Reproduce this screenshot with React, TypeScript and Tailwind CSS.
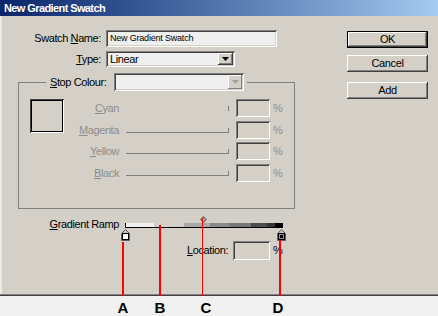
import React from "react";

const raised =
  "shadow-[inset_-1px_-1px_0_#404040,inset_1px_1px_0_#ffffff,inset_-2px_-2px_0_#808080]";
const sunken =
  "shadow-[inset_1px_1px_0_#808080,inset_-1px_-1px_0_#ffffff,inset_2px_2px_0_#404040,inset_-2px_-2px_0_#d4d0c8]";

function DownArrow({ color }: { color: string }) {
  return (
    <svg width="7" height="4" viewBox="0 0 7 4">
      <polygon points="0,0 7,0 3.5,4" fill={color} />
    </svg>
  );
}

function ColourRow({
  label,
  full,
  mt,
}: {
  label: React.ReactNode;
  full: boolean;
  mt: string;
}) {
  return (
    <div className={`flex h-[18px] items-start ${mt}`}>
      <span className="w-[55px] text-right leading-[18px] text-[#8d8d8d]">{label}</span>
      <div
        className={
          full
            ? "ml-[7px] mt-[7px] h-[5px] w-[103px] border-b border-r border-[#808080]"
            : "ml-[7px] mt-[7px] h-[5px] w-[103px] border-r border-[#808080]"
        }
      />
      <div className={`ml-[7px] h-[18px] w-[34px] bg-[#d4d0c8] ${sunken}`} />
      <span className="ml-[3px] leading-[18px] text-[#8d8d8d]">%</span>
    </div>
  );
}

export default function App() {
  return (
    <div className="relative h-[316px] w-[438px] overflow-hidden bg-[#f0f0f0] font-['Liberation_Sans',Arial,sans-serif] text-[11px] tracking-[-0.4px] text-black">
      <div className="flex h-[296px] flex-col bg-[#d4d0c8] shadow-[inset_0_-1px_0_#404040,inset_0_-2px_0_#808080,inset_2px_0_0_#eceae6]">
        {/* Title bar */}
        <div className="h-[16px] shrink-0 bg-linear-to-r from-[#0a246a] to-[#a6caf0] pl-[4px] text-[11px] font-bold leading-[16px] tracking-[-0.6px] text-white">
          New Gradient Swatch
        </div>

        <div className="flex flex-1">
          {/* Left column */}
          <div className="w-[347px] pt-[14px]">
            <div className="flex h-[17px] items-center">
              <span className="w-[101px] text-right">
                Swatch <u>N</u>ame:
              </span>
              <div
                className={`ml-[5px] flex h-[17px] w-[171px] items-center bg-[#efefef] pl-[4px] text-[9px] tracking-[-0.2px] ${sunken}`}
              >
                New Gradient Swatch
              </div>
            </div>

            <div className="mt-[4px] flex h-[16px] items-center">
              <span className="w-[101px] text-right">
                <u>T</u>ype:
              </span>
              <div
                className={`ml-[5px] flex h-[16px] w-[129px] items-center bg-[#efefef] p-[2px] ${sunken}`}
              >
                <span className="flex-1 pl-[2px] text-[11px]">Linear</span>
                <div
                  className={`flex h-full w-[15px] items-center justify-center bg-[#d4d0c8] ${raised}`}
                >
                  <DownArrow color="#000000" />
                </div>
              </div>
            </div>

            <fieldset className="ml-[18px] mt-[6px] h-[136px] w-[277px] border border-[#808080] p-0">
              <legend className="ml-[27px] pl-[4px] pr-[3px]">
                <div className="flex h-[18px] items-center">
                  <span className="w-[60px]">
                    <u>S</u>top Colour:
                  </span>
                  <div
                    className={`ml-[4px] flex h-[18px] w-[130px] bg-[#efefef] p-[2px] ${sunken}`}
                  >
                    <span className="flex-1" />
                    <div className="flex h-full w-[14px] items-center justify-center bg-[#d4d0c8] shadow-[inset_-1px_-1px_0_#808080,inset_1px_1px_0_#ffffff]">
                      <DownArrow color="#a0a0a0" />
                    </div>
                  </div>
                </div>
              </legend>

              <div className="flex pl-[11px] pt-[8px]">
                <div className="h-[34px] w-[34px] p-[1px] shadow-[inset_1px_1px_0_#404040,inset_-1px_-1px_0_#ffffff]">
                  <div className="h-full w-full border border-black" />
                </div>
                <div className="flex flex-col">
                  <ColourRow
                    label={
                      <>
                        <u>C</u>yan
                      </>
                    }
                    full={false}
                    mt="mt-0"
                  />
                  <ColourRow
                    label={
                      <>
                        <u>M</u>agenta
                      </>
                    }
                    full={true}
                    mt="mt-[4px]"
                  />
                  <ColourRow
                    label={
                      <>
                        <u>Y</u>ellow
                      </>
                    }
                    full={true}
                    mt="mt-[3px]"
                  />
                  <ColourRow
                    label={
                      <>
                        <u>B</u>lack
                      </>
                    }
                    full={true}
                    mt="mt-[4px]"
                  />
                </div>
              </div>
            </fieldset>

            {/* Gradient ramp */}
            <div className="mt-[14px] flex h-[5px] items-center">
              <span className="mb-[3px] w-[119px] text-right leading-[11px]">
                <u>G</u>radient Ramp
              </span>
              <div className="relative ml-[6px] flex h-[5px] w-[158px] border-b border-l border-black">
                <div className="h-full w-[28px] bg-[#f0f0f0]" />
                <div className="h-full w-[30px] bg-[#d4d0c8]" />
                <div className="h-full w-[26px] bg-[#a8a8a8]" />
                <div className="h-full w-[20px] bg-[#8a8a8a]" />
                <div className="h-full w-[21px] bg-[#767676]" />
                <div className="h-full w-[16px] bg-[#4e4e4e]" />
                <div className="h-full w-[8px] bg-[#343434]" />
                <div className="h-full w-[8px] bg-[#000000]" />

                <svg
                  className="absolute left-[74px] top-[-7px]"
                  width="7"
                  height="7"
                  viewBox="0 0 7 7"
                >
                  <polygon points="3.5,0 7,3.5 3.5,7 0,3.5" fill="#606060" />
                  <polygon points="3.5,1.5 5.5,3.5 3.5,5.5 1.5,3.5" fill="#b0b0b0" />
                </svg>
                <svg
                  className="absolute left-[-5px] top-[6px]"
                  width="9"
                  height="12"
                  viewBox="0 0 9 12"
                >
                  <polygon
                    points="4.5,0.5 8.5,4.5 8.5,11.5 0.5,11.5 0.5,4.5"
                    fill="#c0c0c0"
                    stroke="#606060"
                  />
                  <rect x="1.5" y="4.5" width="6" height="6" fill="#ffffff" stroke="#000000" />
                </svg>
                <svg
                  className="absolute left-[151px] top-[6px]"
                  width="9"
                  height="12"
                  viewBox="0 0 9 12"
                >
                  <polygon
                    points="4.5,0.5 8.5,4.5 8.5,11.5 0.5,11.5 0.5,4.5"
                    fill="#c0c0c0"
                    stroke="#606060"
                  />
                  <rect x="1.5" y="4.5" width="6" height="6" fill="#000000" stroke="#000000" />
                  <rect x="2.5" y="5.5" width="4" height="4" fill="#000000" stroke="#909090" />
                </svg>
              </div>
            </div>

            <div className="mt-[13px] flex h-[19px] items-center pl-[187px]">
              <span className="w-[42px]">
                <u>L</u>ocation:
              </span>
              <div className={`ml-[4px] h-[19px] w-[37px] bg-[#d4d0c8] ${sunken}`} />
              <span className="ml-[3px]">%</span>
            </div>
          </div>

          {/* Buttons */}
          <div className="flex flex-col pt-[15px]">
            <div className="h-[17px] w-[81px] border border-black">
              <div
                className={`flex h-full items-center justify-center bg-[#d4d0c8] ${raised}`}
              >
                OK
              </div>
            </div>
            <div
              className={`mt-[7px] flex h-[17px] w-[81px] items-center justify-center ${raised}`}
            >
              Cancel
            </div>
            <div
              className={`mt-[10px] flex h-[17px] w-[81px] items-center justify-center ${raised}`}
            >
              Add
            </div>
          </div>
        </div>
      </div>

      <div className="h-[20px]" />

      {/* Annotations */}
      <div className="absolute left-[122px] top-[242px] h-[54px] w-[2px] bg-[#ff0000]" />
      <div className="absolute left-[159px] top-[225px] h-[71px] w-[2px] bg-[#ff0000]" />
      <div className="absolute left-[202px] top-[218px] h-[78px] w-[1px] bg-[#ff0000]" />
      <div className="absolute left-[279px] top-[240px] h-[56px] w-[2px] bg-[#ff0000]" />

      <span className="absolute left-[113px] top-[300px] w-[20px] text-center text-[15px] font-bold leading-[15px] tracking-normal">
        A
      </span>
      <span className="absolute left-[150px] top-[300px] w-[20px] text-center text-[15px] font-bold leading-[15px] tracking-normal">
        B
      </span>
      <span className="absolute left-[196px] top-[300px] w-[20px] text-center text-[15px] font-bold leading-[15px] tracking-normal">
        C
      </span>
      <span className="absolute left-[268px] top-[300px] w-[20px] text-center text-[15px] font-bold leading-[15px] tracking-normal">
        D
      </span>
    </div>
  );
}
